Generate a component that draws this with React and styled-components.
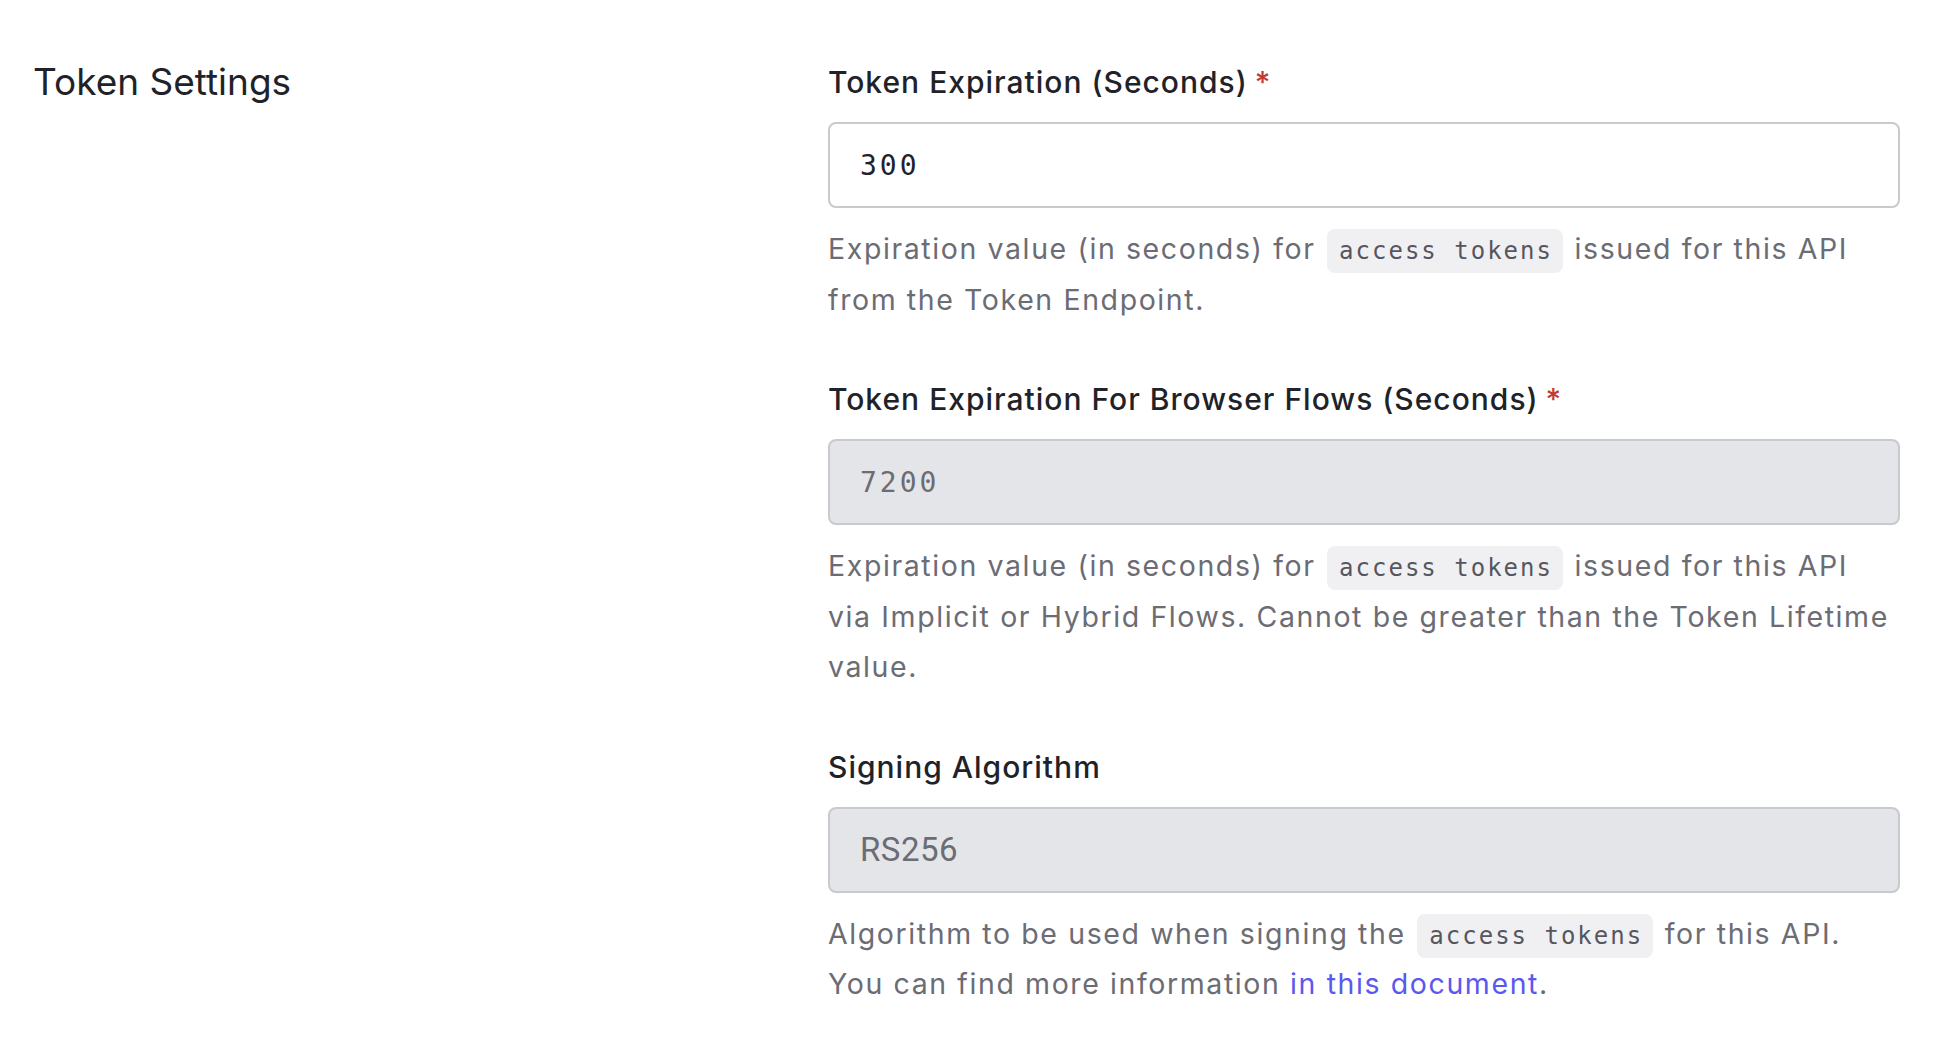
import React from 'react';
import styled, { createGlobalStyle } from 'styled-components';

const GlobalStyle = createGlobalStyle`
  body {
    margin: 0;
    background: #ffffff;
    font-family: Inter, "Noto Sans", sans-serif;
  }
`;

const Page = styled.div`
  display: grid;
  grid-template-columns: 795px 1fr;
  padding: 60px 40px 40px 33px;
`;

const SectionTitle = styled.h2`
  margin: 0;
  font-size: 37px;
  line-height: 44px;
  font-weight: 400;
  color: #1f2329;
`;

const Fields = styled.div`
  display: flex;
  flex-direction: column;
  gap: 52px;
`;

const Field = styled.div`
  display: flex;
  flex-direction: column;
`;

const Label = styled.label`
  font-size: 30px;
  line-height: 44px;
  font-weight: 500;
  letter-spacing: 1px;
  color: #1f2329;
  margin-bottom: 18px;
`;

const Required = styled.span`
  color: #c23b32;
  margin-left: 7px;
`;

const Input = styled.input`
  box-sizing: border-box;
  width: 100%;
  height: 86px;
  padding: 0 30px;
  border: 2px solid #c9cace;
  border-radius: 8px;
  background: ${(p) => (p.disabled ? '#e4e5e8' : '#ffffff')};
  color: ${(p) => (p.disabled ? '#6b6c74' : '#1f2329')};
  -webkit-text-fill-color: ${(p) => (p.disabled ? '#6b6c74' : '#1f2329')};
  opacity: 1;
  font-family: ${(p) => (p.$mono ? '"DejaVu Sans Mono", monospace' : 'Roboto, Inter, sans-serif')};
  font-size: ${(p) => (p.$mono ? '28px' : '33px')};
  letter-spacing: ${(p) => (p.$mono ? '3px' : '0.5px')};
  outline: none;
`;

const Help = styled.p`
  margin: 16px 0 0;
  font-size: 28.5px;
  line-height: 50.5px;
  letter-spacing: 1.6px;
  color: #6b6c74;
`;

const Code = styled.code`
  font-family: "DejaVu Sans Mono", monospace;
  font-size: 24px;
  line-height: 1;
  letter-spacing: 2px;
  background: #f0f0f2;
  color: #55565e;
  border-radius: 8px;
  padding: 8px 10px 8px 12px;
  margin: 0 2px;
`;

const DocLink = styled.a`
  color: #5a58f0;
  text-decoration: none;
`;

export default function App() {
  return (
    <>
      <GlobalStyle />
      <Page>
        <SectionTitle>Token Settings</SectionTitle>
        <Fields>
          <Field>
            <Label>
              Token Expiration (Seconds)<Required>*</Required>
            </Label>
            <Input $mono value="300" readOnly />
            <Help>
              Expiration value (in seconds) for <Code>access tokens</Code> issued for this API
              from the Token Endpoint.
            </Help>
          </Field>
          <Field>
            <Label>
              Token Expiration For Browser Flows (Seconds)<Required>*</Required>
            </Label>
            <Input $mono value="7200" disabled />
            <Help>
              Expiration value (in seconds) for <Code>access tokens</Code> issued for this API
              via Implicit or Hybrid Flows. Cannot be greater than the Token Lifetime value.
            </Help>
          </Field>
          <Field>
            <Label>Signing Algorithm</Label>
            <Input value="RS256" disabled />
            <Help>
              Algorithm to be used when signing the <Code>access tokens</Code> for this API.
              You can find more information <DocLink href="#">in this document</DocLink>.
            </Help>
          </Field>
        </Fields>
      </Page>
    </>
  );
}
